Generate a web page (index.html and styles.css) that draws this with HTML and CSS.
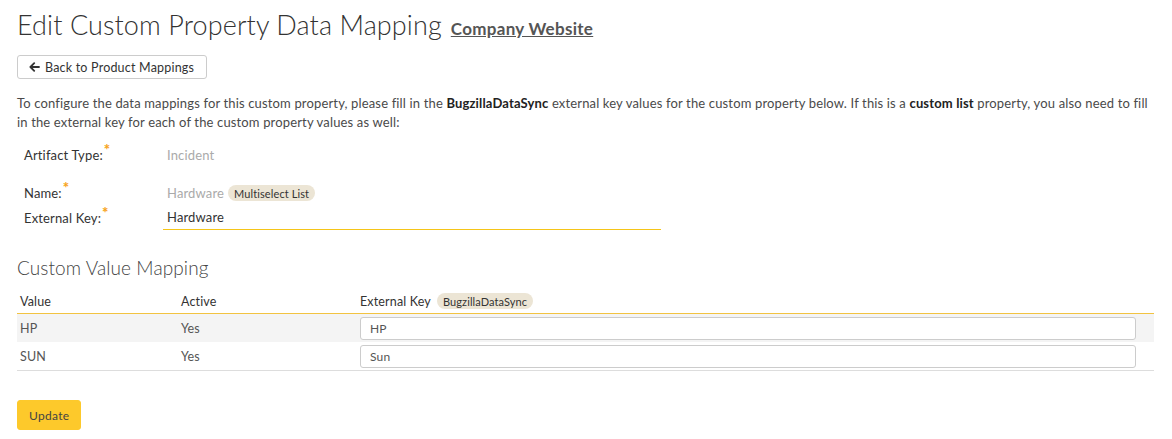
FILE: index.html
```html
<!DOCTYPE html>
<html lang="en">
<head>
<meta charset="utf-8">
<title>Edit Custom Property Data Mapping</title>
<link rel="stylesheet" href="styles.css">
</head>
<body>
<div class="page">
  <h1 class="title"><span class="title-text">Edit Custom Property Data Mapping</span> <a class="title-link" href="#">Company Website</a></h1>

  <button class="btn btn-back" type="button">
    <svg class="arrow" width="11" height="10" viewBox="0 0 11 10" aria-hidden="true">
      <path d="M10 5H2M5.2 1.2L1.4 5l3.8 3.8" fill="none" stroke="#333" stroke-width="1.8" stroke-linecap="round" stroke-linejoin="round"/>
    </svg>
    <span class="btn-label">Back to Product Mappings</span>
  </button>

  <p class="intro">To configure the data mappings for this custom property, please fill in the <b>BugzillaDataSync</b> external key values for the custom property below. If this is a <b>custom list</b> property, you also need to fill in the external key for each of the custom property values as well:</p>

  <div class="form">
    <div class="form-row row-artifact">
      <span class="label">Artifact Type:<span class="req">*</span></span>
      <span class="value muted">Incident</span>
    </div>
    <div class="form-row row-name">
      <span class="label">Name:<span class="req">*</span></span>
      <span class="value"><span class="muted">Hardware</span> <span class="badge">Multiselect List</span></span>
    </div>
    <div class="form-row row-key">
      <span class="label">External Key:<span class="req">*</span></span>
      <span class="value"><input class="line-input" type="text" value="Hardware"></span>
    </div>
  </div>

  <h2 class="section">Custom Value Mapping</h2>

  <table class="grid">
    <colgroup><col class="c1"><col class="c2"><col class="c3"></colgroup>
    <thead>
      <tr><th>Value</th><th>Active</th><th>External Key <span class="badge">BugzillaDataSync</span></th></tr>
    </thead>
    <tbody>
      <tr class="alt"><td>HP</td><td>Yes</td><td><input class="box-input" type="text" value="HP"></td></tr>
      <tr><td>SUN</td><td>Yes</td><td><input class="box-input" type="text" value="Sun"></td></tr>
    </tbody>
  </table>

  <button class="btn btn-update" type="button">Update</button>
</div>
</body>
</html>
```

FILE: styles.css
```css
html, body {
  margin: 0;
  padding: 0;
  background: #fff;
}

body {
  font-family: "Lato", "Open Sans", sans-serif;
  font-size: 13px;
  letter-spacing: 0.15px;
  color: #444;
}

.page {
  padding: 8px 18px 0 17px;
}

.title {
  display: flex;
  align-items: baseline;
  gap: 9px;
  height: 34px;
  margin: 0;
  font-weight: 300;
  color: #333;
}

.title-text {
  font-size: 27px;
  line-height: 34px;
  letter-spacing: 0.1px;
}

.title-link {
  font-size: 17px;
  font-weight: 700;
  color: #555;
  text-decoration: underline;
  letter-spacing: 0.3px;
}

.btn {
  display: flex;
  align-items: center;
  font-family: inherit;
  white-space: nowrap;
  cursor: pointer;
}

.btn-back {
  margin-top: 13px;
  height: 24px;
  width: 190px;
  padding: 0 0 0 11px;
  gap: 5px;
  background: #fff;
  border: 1px solid #ccc;
  border-radius: 3px;
  font-size: 12.5px;
  letter-spacing: 0.2px;
  color: #333;
}

.btn-label {
  white-space: nowrap;
}

.arrow {
  display: block;
  flex: none;
}

.intro {
  margin: 15px 0 0;
  line-height: 19px;
  color: #4a4a4a;
}

.intro b {
  font-weight: 700;
  color: #222;
}

.form {
  display: flex;
  flex-direction: column;
}

.form-row {
  display: flex;
  align-items: center;
  height: 24px;
}

.row-artifact { margin-top: 11px; }
.row-name { margin-top: 14px; }
.row-key { margin-top: 0; height: 25px; }

.label {
  width: 139px;
  padding-left: 7px;
  color: #333;
}

.req {
  color: #f7a41d;
  font-weight: 900;
  position: relative;
  top: -5px;
  margin-left: 1px;
  font-size: 15px;
  line-height: 0;
}

.value {
  display: flex;
  align-items: center;
  gap: 4px;
  padding-left: 4px;
}

.muted {
  color: #aaa;
}

.badge {
  display: inline-flex;
  align-items: center;
  height: 16px;
  padding: 0 6px;
  border-radius: 8px;
  background: #ece5d5;
  color: #333;
  font-size: 11px;
  letter-spacing: 0.1px;
}

.line-input {
  width: 498px;
  height: 25px;
  margin-left: -4px;
  padding: 0 4px;
  border: 0;
  border-bottom: 1px solid #f5c518;
  font-family: inherit;
  font-size: 13px;
  letter-spacing: 0.15px;
  color: #333;
  background: transparent;
  outline: none;
  box-sizing: border-box;
}

.section {
  margin: 25px 0 0;
  font-weight: 300;
  font-size: 19px;
  line-height: 26px;
  letter-spacing: 0.1px;
  color: #444;
}

.grid {
  margin-top: 8px;
  width: 100%;
  border-collapse: collapse;
}

.c1 { width: 161px; }
.c2 { width: 179px; }

.grid th {
  text-align: left;
  font-weight: 400;
  font-size: 12.5px;
  height: 24px;
  padding: 0 3px;
  border-bottom: 1px solid #f2c341;
  color: #333;
}

.grid th .badge {
  margin-left: 3px;
}

.grid td {
  height: 28px;
  padding: 0 3px;
  font-size: 12.5px;
  color: #555;
}

.grid tbody tr:last-child td {
  border-bottom: 1px solid #ddd;
}

.grid tr.alt td {
  background: #f4f4f4;
}

.box-input {
  display: block;
  width: 776px;
  height: 23px;
  padding: 0 9px;
  border: 1px solid #ccc;
  border-radius: 3px;
  font-family: inherit;
  font-size: 12px;
  letter-spacing: 0.15px;
  color: #555;
  background: #fff;
  box-sizing: border-box;
}

.btn-update {
  margin-top: 29px;
  height: 30px;
  padding: 0 11px;
  background: #fdc92b;
  border: 1px solid #fdc92b;
  border-radius: 3px;
  font-size: 12px;
  letter-spacing: 0.3px;
  color: #444;
}
```
